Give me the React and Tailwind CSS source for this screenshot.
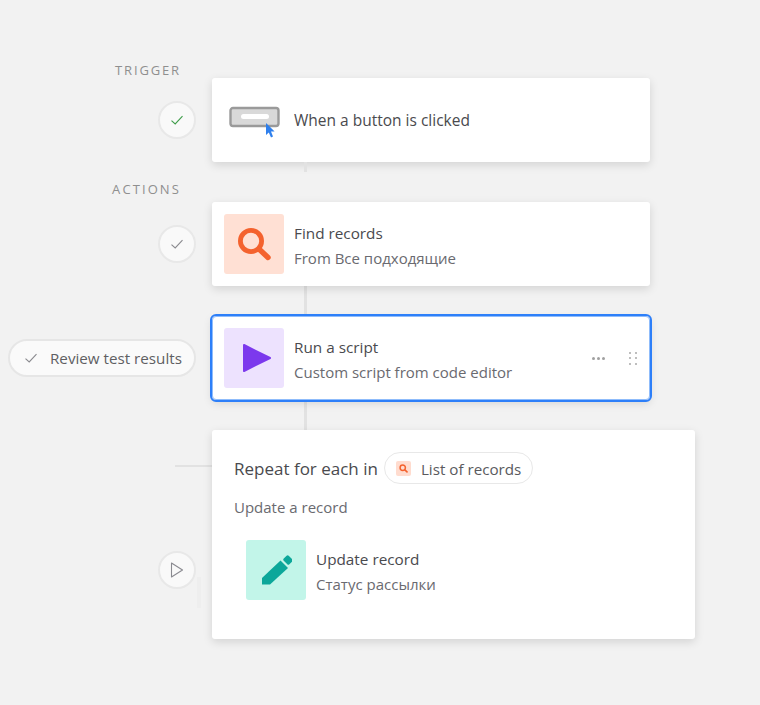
import React from "react";

function Check({ color = "#8a8a8f", size = 16 }) {
  return (
    <svg width={size} height={size} viewBox="0 0 16 16" fill="none">
      <path d="M2.5 8.6 L6.2 12 L13.5 4.2" stroke={color} strokeWidth="1.1" />
    </svg>
  );
}

function Circle({ children }) {
  return (
    <div className="flex h-[38px] w-[38px] items-center justify-center rounded-full border-2 border-[#e8e8e8] bg-[#f9f9f9]">
      {children}
    </div>
  );
}

function Tile({ bg, children }) {
  return (
    <div className={`flex h-[60px] w-[60px] shrink-0 items-center justify-center rounded-[3px] ${bg}`}>
      {children}
    </div>
  );
}

function SearchIcon({ size = 36, color = "#f4622e", stroke = 4.8 }) {
  return (
    <svg width={size} height={size} viewBox="0 0 36 36" fill="none">
      <circle cx="15" cy="15" r="10.6" stroke={color} strokeWidth={stroke} />
      <path d="M23.5 23.5 L32 31.5" stroke={color} strokeWidth={stroke + 0.6} strokeLinecap="round" />
    </svg>
  );
}

function Titles({ title, sub }) {
  return (
    <div className="ml-[10px] flex flex-col pt-[2px]">
      <div className="text-[15.3px] leading-[20px] text-[#4a4a4e]">{title}</div>
      <div className="mt-[5px] text-[15px] leading-[20px] text-[#6a6a70]">{sub}</div>
    </div>
  );
}

function Connector({ h }) {
  return <div className={`ml-[92px] w-[3px] bg-[#e2e2e2] ${h}`} />;
}

function Gutter({ children, className = "" }) {
  return <div className={`flex w-[212px] shrink-0 justify-end pr-[16px] ${className}`}>{children}</div>;
}

const Card = "flex h-[84px] w-[438px] items-center rounded-[3px] bg-white shadow-[0_3px_10px_rgba(0,0,0,0.13)]";

export default function App() {
  return (
    <div className="h-[705px] w-[760px] overflow-hidden bg-[#f2f2f2] pt-[61px] font-['Open_Sans','Noto_Sans',sans-serif]">
      <div className="flex h-[17px]">
        <div className="w-[181px] pt-[1px] text-right text-[13px] leading-[17px] tracking-[1.85px] text-[#8f8f8f]">TRIGGER</div>
      </div>

      <div className="flex">
        <Gutter className="items-center">
          <Circle><Check color="#3f9d4a" /></Circle>
        </Gutter>
        <div className={`${Card} px-3`}>
          <div className="flex w-[60px] justify-center pt-[4px] pl-[1px]">
            <svg width="52" height="32" viewBox="0 0 52 32" fill="none">
              <rect x="1.5" y="2" width="48" height="18" rx="2.5" fill="#d9d9d9" stroke="#9a9a9a" strokeWidth="2.4" />
              <rect x="12" y="8" width="28" height="5" rx="2.5" fill="#ffffff" />
              <path d="M37 17 L37 29 L39.8 26.4 L42 31.6 L44 30.6 L42 25.6 L45.6 25.4 Z" fill="#2f80ed" />
            </svg>
          </div>
          <div className="ml-[10px] pt-[2px] text-[15.5px] text-[#4a4a4e]">When a button is clicked</div>
        </div>
      </div>

      <div className="flex h-[40px]">
        <div className="w-[181px] shrink-0 pt-[19px] text-right text-[13px] leading-[17px] tracking-[2.1px] text-[#8f8f8f]">ACTIONS</div>
        <div className="w-[31px] shrink-0" />
        <Connector h="h-[10px]" />
      </div>

      <div className="flex">
        <Gutter className="items-center">
          <Circle><Check /></Circle>
        </Gutter>
        <div className={`${Card} px-3`}>
          <Tile bg="bg-[#ffe0d4]"><SearchIcon /></Tile>
          <Titles title="Find records" sub="From Все подходящие" />
        </div>
      </div>

      <div className="ml-[212px]"><Connector h="h-[30px]" /></div>

      <div className="flex">
        <Gutter className="items-center">
          <div className="flex h-[38px] w-[188px] items-center rounded-full border-2 border-[#e6e6e6] bg-[#fafafa] pl-[13px] text-[15.2px] text-[#5f5f63]">
            <Check />
            <span className="ml-[11px] pt-[1px]">Review test results</span>
          </div>
        </Gutter>
        <div className={`${Card} rounded-[4px] border border-[#8fbcfb] px-[11px] outline-2 outline-[#2d7ff9]`}>
          <Tile bg="bg-[#ede2fe]">
            <svg width="34" height="30" viewBox="0 0 34 30">
              <path d="M7 2 L33 15 L7 28 Z" fill="#7c39ed" stroke="#7c39ed" strokeWidth="2" strokeLinejoin="round" />
            </svg>
          </Tile>
          <Titles title="Run a script" sub="Custom script from code editor" />
          <div className="ml-auto flex items-center pr-[1px]">
            <div className="flex gap-[2px]">
              <span className="h-[3px] w-[3px] rounded-full bg-[#a0a0a0]" />
              <span className="h-[3px] w-[3px] rounded-full bg-[#a0a0a0]" />
              <span className="h-[3px] w-[3px] rounded-full bg-[#a0a0a0]" />
            </div>
            <div className="ml-[24px] grid grid-cols-2 gap-x-[4px] gap-y-[3.5px]">
              {[0, 1, 2, 3, 4, 5].map((i) => (
                <span key={i} className="h-[2px] w-[2px] rounded-full bg-[#a8a8a8]" />
              ))}
            </div>
          </div>
        </div>
      </div>

      <div className="ml-[212px]"><Connector h="h-[30px]" /></div>

      <div className="flex">
        <div className="flex w-[212px] shrink-0 flex-col items-end">
          <div className="mt-[35px] h-[2px] w-[37px] bg-[#e2e2e2]" />
          <div className="mt-[84px] mr-[16px]">
            <Circle>
              <svg width="16" height="18" viewBox="0 0 16 18" fill="none">
                <path d="M2.5 2 L13.5 9 L2.5 16 Z" stroke="#8a8a90" strokeWidth="1.1" strokeLinejoin="round" />
              </svg>
            </Circle>
          </div>
          <div className="mr-[11px] -mt-[12px] h-[31px] w-[4px] bg-[#eeeeee]" />
        </div>
        <div className="h-[209px] w-[483px] rounded-[3px] bg-white px-[22px] pt-[22px] shadow-[0_3px_10px_rgba(0,0,0,0.13)]">
          <div className="flex h-[32px] items-center">
            <span className="pt-[1px] text-[17px] text-[#4a4a4e]">Repeat for each in</span>
            <div className="ml-[6px] flex h-[32px] items-center rounded-full border border-[#e8e8e8] px-[11px] text-[15.2px] text-[#5a5a5e]">
              <span className="flex h-[15px] w-[15px] items-center justify-center rounded-[2px] bg-[#ffdccf]">
                <SearchIcon size={9} stroke={6} />
              </span>
              <span className="ml-[10px] pt-[3px]">List of records</span>
            </div>
          </div>
          <div className="mt-[13px] text-[15px] leading-[20px] text-[#6a6a70]">Update a record</div>
          <div className="mt-[23px] ml-[12px] flex items-center">
            <Tile bg="bg-[#c2f5e9]">
              <svg width="32" height="32" viewBox="0 0 32 32">
                <path d="M2 30.5 L2 24 L20.5 6.5 L28 14 L10 30.5 Z" fill="#0ca79a" />
                <rect x="24" y="2.5" width="8" height="7" rx="1.5" transform="rotate(45 28 6)" fill="#0ca79a" />
              </svg>
            </Tile>
            <Titles title="Update record" sub="Статус рассылки" />
          </div>
        </div>
      </div>
    </div>
  );
}
